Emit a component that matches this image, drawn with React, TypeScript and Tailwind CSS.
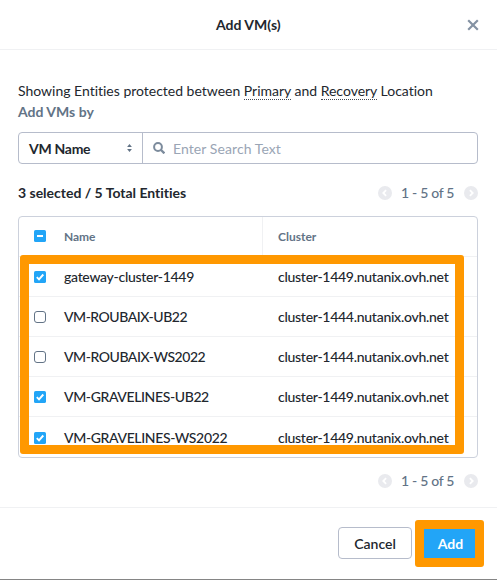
import type { ReactNode } from "react";

type VM = { name: string; cluster: string; checked: boolean; tracking: string };

const vms: VM[] = [
  { name: "gateway-cluster-1449", cluster: "cluster-1449.nutanix.ovh.net", checked: true, tracking: "tracking-[-0.29px]" },
  { name: "VM-ROUBAIX-UB22", cluster: "cluster-1444.nutanix.ovh.net", checked: false, tracking: "tracking-[-0.48px]" },
  { name: "VM-ROUBAIX-WS2022", cluster: "cluster-1444.nutanix.ovh.net", checked: false, tracking: "tracking-[-0.45px]" },
  { name: "VM-GRAVELINES-UB22", cluster: "cluster-1449.nutanix.ovh.net", checked: true, tracking: "tracking-[-0.38px]" },
  { name: "VM-GRAVELINES-WS2022", cluster: "cluster-1449.nutanix.ovh.net", checked: true, tracking: "tracking-[-0.36px]" },
];

function Box({ state }: { state: "on" | "off" | "some" }) {
  if (state === "off") {
    return <span className="block size-3 rounded-[3px] border border-[#627386] bg-white" />;
  }
  return (
    <svg className="block size-3" viewBox="0 0 12 12" fill="none">
      <rect width="12" height="12" rx="1.6" fill="#22a5f7" />
      {state === "on" ? (
        <path d="M2.8 6.2 5 8.4 9.3 3.5" stroke="#fff" strokeWidth="1.9" />
      ) : (
        <path d="M3 6h6" stroke="#fff" strokeWidth="2" />
      )}
    </svg>
  );
}

function PageArrow({ next = false }: { next?: boolean }) {
  return (
    <svg className="block size-3.5" viewBox="0 0 14 14" fill="none">
      <circle cx="7" cy="7" r="7" fill="#e9eaee" />
      <path d={next ? "M5.9 4.2 8.7 7 5.9 9.8" : "M8.1 4.2 5.3 7l2.8 2.8"} stroke="#fff" strokeWidth="1.8" />
    </svg>
  );
}

function Pager() {
  return (
    <div className="flex items-center">
      <PageArrow />
      <span className="ml-[9px] w-[55px] whitespace-nowrap font-medium tracking-[-0.3px] text-[#627386]">1 - 5 of 5</span>
      <span className="ml-[8px]">
        <PageArrow next />
      </span>
    </div>
  );
}

function Term({ children }: { children: ReactNode }) {
  return <span className="border-b border-dotted border-[#444b55]">{children}</span>;
}

export default function App() {
  return (
    <div className="flex h-[580px] w-[497px] flex-col border-b border-[#858585] bg-white font-[Lato,sans-serif] text-[14px] leading-4 text-[#22272e]">
      <header className="flex h-[50px] shrink-0 items-center border-b border-[#f0f1f3] pl-[216px] pr-[18px]">
        <h1 className="flex-1 whitespace-nowrap font-bold">Add VM(s)</h1>
        <svg className="size-3" viewBox="0 0 12 12" fill="none">
          <path d="m1.2 1.2 9.6 9.6M10.8 1.2 1.2 10.8" stroke="#8492a3" strokeWidth="2.2" />
        </svg>
      </header>

      <main className="h-[457px] shrink-0 pl-[18px] pt-[33px] pr-[19px]">
        <p className="h-[21px] whitespace-nowrap tracking-[-0.01px]">
          Showing Entities protected between <Term>Primary</Term> and <Term>Recovery</Term> Location
        </p>
        <p className="h-7 whitespace-nowrap font-bold text-[#627386]">Add VMs by</p>

        <div className="flex h-8 rounded-[4px] border border-[#b6bccb]">
          <div className="flex w-[124px] items-center justify-between border-r border-[#b6bccb] pl-2.5 pr-2.5">
            <span className="whitespace-nowrap pt-0.5 font-bold tracking-[-0.28px]">VM Name</span>
            <svg className="h-2 w-[5px]" viewBox="0 0 5 8">
              <path d="M.1 3 2.5 0 4.9 3ZM.1 5h4.8L2.5 8Z" fill="#627386" />
            </svg>
          </div>
          <div className="flex items-center pl-2.5">
            <svg className="size-3" viewBox="0 0 12 12" fill="none" stroke="#7c8b9c" strokeWidth="2">
              <circle cx="5" cy="5" r="3.9" />
              <path d="m7.8 7.8 3.6 3.6" strokeWidth="2.3" />
            </svg>
            <span className="ml-2 whitespace-nowrap pt-0.5 tracking-[0.08px] text-[#9aa5b5]">Enter Search Text</span>
          </div>
        </div>

        <div className="flex h-[52px] items-center justify-between pt-[5px]">
          <span className="whitespace-nowrap font-bold tracking-[-0.01px]">3 selected / 5 Total Entities</span>
          <Pager />
        </div>

        <div className="relative h-[242px] rounded-[4px] border border-[#ccd1dc]">
          <div className="flex h-10 items-center border-b border-[#f0f1f3] text-[12px] font-bold text-[#627386]">
            <div className="flex h-full w-[244px] items-center border-r border-[#f0f1f3] pl-[15px]">
              <span className="pb-0.5">
                <Box state="some" />
              </span>
              <span className="ml-[18px] pt-px tracking-[-0.1px]">Name</span>
            </div>
            <span className="pl-[15px] pt-px">Cluster</span>
          </div>
          {vms.map((vm) => (
            <div key={vm.name} className="flex h-10 items-center border-b border-[#f0f1f3] font-medium nth-[6]:h-[41px] nth-[6]:border-b-0 nth-[6]:pt-px">
              <div className="flex w-[244px] items-center pl-[15px]">
                <Box state={vm.checked ? "on" : "off"} />
                <span className={`ml-[18px] whitespace-nowrap ${vm.tracking}`}>{vm.name}</span>
              </div>
              <span className="whitespace-nowrap pl-[15px] tracking-[-0.27px]">{vm.cluster}</span>
            </div>
          ))}
          <div className="absolute left-[1px] top-[38px] h-[199px] w-[444px] rounded-[3px] border-[9px] border-[#ff9800]" />
        </div>

        <div className="mt-[15px] flex justify-end">
          <Pager />
        </div>
      </main>

      <footer className="flex flex-1 items-start justify-end border-t border-[#f0f1f3] pr-[13px] pt-3">
        <button className="mt-[7px] mr-[3px] h-8 w-[74px] rounded-[4px] border border-[#b6bccb] pt-0.5 font-semibold">Cancel</button>
        <button className="h-[47px] w-[69px] rounded-[3px] border-[9px] border-[#ff9800] bg-[#22a5f7] pl-0.5 pt-px font-bold text-white">Add</button>
      </footer>
    </div>
  );
}
